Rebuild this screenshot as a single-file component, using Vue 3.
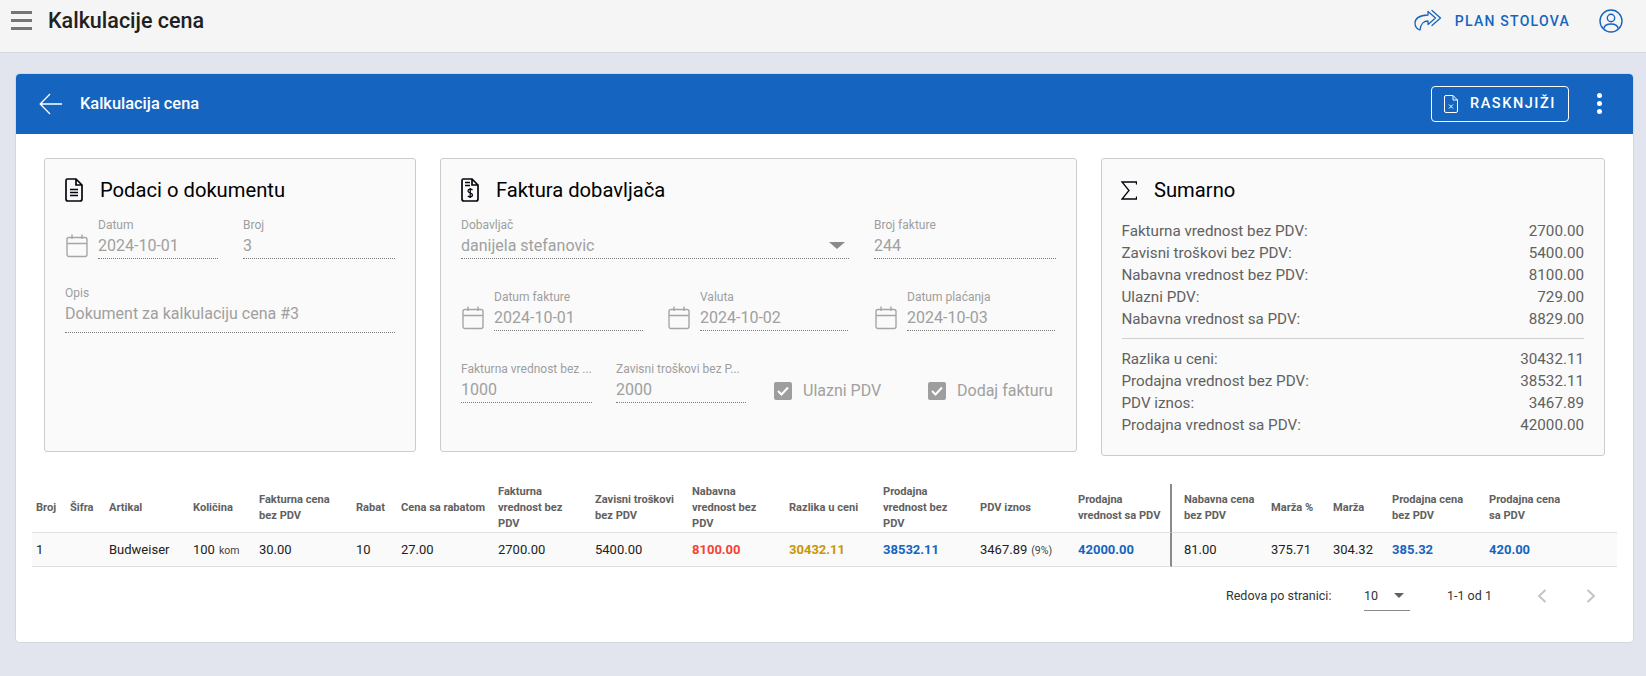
<script setup>
const columns = [
  { label: 'Broj', width: 38 },
  { label: 'Šifra', width: 39 },
  { label: 'Artikal', width: 84 },
  { label: 'Količina', width: 66 },
  { label: 'Fakturna cena\nbez PDV', width: 97 },
  { label: 'Rabat', width: 45 },
  { label: 'Cena sa rabatom', width: 97 },
  { label: 'Fakturna\nvrednost bez\nPDV', width: 97 },
  { label: 'Zavisni troškovi\nbez PDV', width: 97 },
  { label: 'Nabavna\nvrednost bez\nPDV', width: 97 },
  { label: 'Razlika u ceni', width: 94 },
  { label: 'Prodajna\nvrednost bez\nPDV', width: 97 },
  { label: 'PDV iznos', width: 98 },
  { label: 'Prodajna\nvrednost sa PDV', width: 94, divider: true },
  { label: 'Nabavna cena\nbez PDV', width: 99, afterDivider: true },
  { label: 'Marža %', width: 62 },
  { label: 'Marža', width: 59 },
  { label: 'Prodajna cena\nbez PDV', width: 97 },
  { label: 'Prodajna cena\nsa PDV', width: 128 }
]
const row = [
  { v: '1' }, { v: '' }, { v: 'Budweiser' }, { v: '100', small: 'kom' }, { v: '30.00' }, { v: '10' }, { v: '27.00' },
  { v: '2700.00' }, { v: '5400.00' }, { v: '8100.00', c: 'red' }, { v: '30432.11', c: 'gold' }, { v: '38532.11', c: 'blue' },
  { v: '3467.89', small: '(9%)' }, { v: '42000.00', c: 'blue' }, { v: '81.00' }, { v: '375.71' }, { v: '304.32' },
  { v: '385.32', c: 'blue' }, { v: '420.00', c: 'blue' }
]
const sumTop = [
  ['Fakturna vrednost bez PDV:', '2700.00'],
  ['Zavisni troškovi bez PDV:', '5400.00'],
  ['Nabavna vrednost bez PDV:', '8100.00'],
  ['Ulazni PDV:', '729.00'],
  ['Nabavna vrednost sa PDV:', '8829.00']
]
const sumBottom = [
  ['Razlika u ceni:', '30432.11'],
  ['Prodajna vrednost bez PDV:', '38532.11'],
  ['PDV iznos:', '3467.89'],
  ['Prodajna vrednost sa PDV:', '42000.00']
]
const dates = [
  { label: 'Datum fakture', value: '2024-10-01' },
  { label: 'Valuta', value: '2024-10-02' },
  { label: 'Datum plaćanja', value: '2024-10-03' }
]
</script>

<template>
  <div class="page">
    <header class="topbar">
      <div class="burger"><i></i><i></i><i></i></div>
      <h1 class="app-title">Kalkulacije cena</h1>
      <div class="plan">
        <svg width="28" height="23" viewBox="0 0 28 23" fill="none" stroke="#1565c0" stroke-width="1.3" stroke-linejoin="round" stroke-linecap="round">
          <path d="M14 2.5 L21.5 9 L14 15.5 V12 C9.5 12 7 14 6 21 C3 20 1 17.5 1 14 C1 9.5 6 6.5 14 6 Z" />
          <path d="M18 1.5 L26.5 9 L18 16.5" />
        </svg>
        <span>PLAN STOLOVA</span>
      </div>
      <svg class="account" width="24" height="24" viewBox="0 0 24 24" fill="none" stroke="#1565c0" stroke-width="1.4">
        <circle cx="12" cy="12" r="11" />
        <circle cx="12" cy="9" r="3.7" />
        <path d="M4.8 19.5 C5.5 16 8.5 15 12 15 C15.5 15 18.5 16 19.2 19.5" />
      </svg>
    </header>

    <main class="main">
      <section class="card">
        <div class="card-head">
          <svg class="back" width="24" height="22" viewBox="0 0 24 22" fill="none" stroke="#fff" stroke-width="1.3">
            <path d="M23 11 H1.5 M11 1 L1.2 11 L11 21" />
          </svg>
          <span class="card-title">Kalkulacija cena</span>
          <button class="raskn">
            <svg width="14" height="18" viewBox="0 0 14 18" fill="none" stroke="#fff" stroke-width="1">
              <path d="M1.5 .5 H9 L13.5 5 V16 A1.5 1.5 0 0 1 12 17.5 H2 A1.5 1.5 0 0 1 .5 16 V2 A1.5 1.5 0 0 1 2 .5 Z M9 .5 V5 H13.5" />
              <path d="M5 9.5 L9 13.5 M9 9.5 L5 13.5" />
            </svg>
            <span>RASKNJIŽI</span>
          </button>
          <div class="dots"><i></i><i></i><i></i></div>
        </div>

        <div class="card-body">
          <div class="panels">
            <div class="panel p1">
              <div class="panel-head">
                <svg width="18" height="24" viewBox="0 0 18 24" fill="none" stroke="#050510" stroke-width="1.7">
                  <path d="M2.5 1 H11 L17 7 V21 A2 2 0 0 1 15 23 H3 A2 2 0 0 1 1 21 V2.5 A1.5 1.5 0 0 1 2.5 1 Z M11 1 V7 H17" />
                  <path d="M5 11.5 H13 M5 14.5 H13 M5 17.5 H13" />
                </svg>
                <h2>Podaci o dokumentu</h2>
              </div>
              <div class="frow">
                <svg class="cal" width="22" height="24" viewBox="0 0 22 24" fill="none" stroke="#a6a6a6" stroke-width="1.4">
                  <rect x="1" y="3.5" width="20" height="19" rx="2" />
                  <path d="M1 9.5 H21 M6 .5 V5 M16 .5 V5" />
                </svg>
                <div class="field w120"><label>Datum</label><div class="val">2024-10-01</div></div>
                <div class="field grow"><label>Broj</label><div class="val">3</div></div>
              </div>
              <div class="frow mt-opis">
                <div class="field grow flush"><label>Opis</label><div class="val tall">Dokument za kalkulaciju cena #3</div></div>
              </div>
            </div>

            <div class="panel p2">
              <div class="panel-head">
                <svg width="18" height="24" viewBox="0 0 18 24" fill="none" stroke="#050510" stroke-width="1.7">
                  <path d="M2.5 1 H11 L17 7 V21 A2 2 0 0 1 15 23 H3 A2 2 0 0 1 1 21 V2.5 A1.5 1.5 0 0 1 2.5 1 Z M11 1 V7 H17" />
                  <path d="M4 4.5 H9 M4 7.5 H9" stroke-width="1.3" />
                  <path d="M11.5 12 C10.5 10.8 7 10.8 7 13 C7 15.5 11.5 14.5 11.5 17 C11.5 19.2 8 19.2 6.8 18 M9.2 10 V20" stroke-width="1.3" />
                </svg>
                <h2>Faktura dobavljača</h2>
              </div>
              <div class="frow">
                <div class="field dob flush">
                  <label>Dobavljač</label>
                  <div class="val select">danijela stefanovic<span class="caret"></span></div>
                </div>
                <div class="field grow flush"><label>Broj fakture</label><div class="val">244</div></div>
              </div>
              <div class="frow dates mt-dates">
                <div v-for="d in dates" :key="d.label" class="date-cell">
                  <svg class="cal" width="22" height="24" viewBox="0 0 22 24" fill="none" stroke="#a6a6a6" stroke-width="1.4">
                    <rect x="1" y="3.5" width="20" height="19" rx="2" />
                    <path d="M1 9.5 H21 M6 .5 V5 M16 .5 V5" />
                  </svg>
                  <div class="field grow"><label>{{ d.label }}</label><div class="val">{{ d.value }}</div></div>
                </div>
              </div>
              <div class="frow mt-values">
                <div class="field w131 flush"><label>Fakturna vrednost bez ...</label><div class="val">1000</div></div>
                <div class="field w130 flush"><label>Zavisni troškovi bez P...</label><div class="val">2000</div></div>
                <div class="checks">
                  <div class="check"><span class="box"><svg width="12" height="10" viewBox="0 0 12 10" fill="none" stroke="#fff" stroke-width="2"><path d="M1 5 L4.5 8.5 L11 1.5" /></svg></span>Ulazni PDV</div>
                  <div class="check"><span class="box"><svg width="12" height="10" viewBox="0 0 12 10" fill="none" stroke="#fff" stroke-width="2"><path d="M1 5 L4.5 8.5 L11 1.5" /></svg></span>Dodaj fakturu</div>
                </div>
              </div>
            </div>

            <div class="panel p3">
              <div class="panel-head">
                <svg width="16" height="19" viewBox="0 0 16 19" fill="none" stroke="#050510" stroke-width="1.3">
                  <path d="M15.5 3.5 V1 H1 L8 9.5 L1 18 H15.5 V15.5" />
                </svg>
                <h2>Sumarno</h2>
              </div>
              <div class="sum">
                <div v-for="s in sumTop" :key="s[0]" class="sum-row"><span>{{ s[0] }}</span><span>{{ s[1] }}</span></div>
                <div class="sum-sep"></div>
                <div v-for="s in sumBottom" :key="s[0]" class="sum-row"><span>{{ s[0] }}</span><span>{{ s[1] }}</span></div>
              </div>
            </div>
          </div>

          <table class="grid">
            <colgroup>
              <col v-for="c in columns" :key="c.label" :style="{ width: c.width + 'px' }" />
            </colgroup>
            <thead>
              <tr>
                <th v-for="c in columns" :key="c.label" :class="{ divider: c.divider, after: c.afterDivider }">{{ c.label }}</th>
              </tr>
            </thead>
            <tbody>
              <tr>
                <td v-for="(cell, i) in row" :key="i" :class="[cell.c, { divider: columns[i].divider, after: columns[i].afterDivider }]">{{ cell.v }}<small v-if="cell.small">{{ cell.small }}</small></td>
              </tr>
            </tbody>
          </table>

          <div class="pager">
            <span class="rpp">Redova po stranici:</span>
            <div class="rpp-select"><span>10</span><span class="mini-caret"></span></div>
            <span class="range">1-1 od 1</span>
            <svg class="chev" width="10" height="14" viewBox="0 0 10 14" fill="none" stroke="#c4c4c4" stroke-width="2"><path d="M8.5 1 L2 7 L8.5 13" /></svg>
            <svg class="chev" width="10" height="14" viewBox="0 0 10 14" fill="none" stroke="#c4c4c4" stroke-width="2"><path d="M1.5 1 L8 7 L1.5 13" /></svg>
          </div>
        </div>
      </section>
    </main>
  </div>
</template>

<style>
html, body { margin: 0; background: #e2e5ee; }
</style>

<style scoped>
.page { width: 1646px; height: 676px; overflow: hidden; background: #e2e5ee; font-family: Roboto, "Liberation Sans", sans-serif; }
.topbar { height: 53px; box-sizing: border-box; background: #f5f5f5; border-bottom: 1px solid #d6d9e3; display: flex; align-items: center; padding: 0 23px 11px 11px; }
.burger { width: 21px; display: flex; flex-direction: column; gap: 5px; }
.burger i { display: block; height: 3px; background: #757575; }
.app-title { margin: 0 0 0 16px; font-size: 21.5px; font-weight: 500; color: #212121; flex: 1; }
.plan { display: flex; align-items: center; gap: 13px; color: #1565c0; font-size: 14px; font-weight: 500; letter-spacing: 1.25px; margin-right: 29px; }
.main { padding: 21px 13px 0 16px; }
.card { width: 1617px; height: 568px; background: #fff; border-radius: 4px; box-shadow: 0 0 0 1px rgba(0,0,0,.06); overflow: hidden; }
.card-head { height: 60px; background: #1565c0; display: flex; align-items: center; color: #fff; padding: 0 27px 1px 23px; box-sizing: border-box; }
.card-title { margin-left: 17px; font-size: 16.4px; font-weight: 500; flex: 1; }
.raskn { height: 36px; width: 138px; box-sizing: border-box; background: transparent; border: 1px solid #fff; border-radius: 4px; color: #fff; display: flex; align-items: center; justify-content: center; gap: 12px; font-family: inherit; font-size: 14.5px; font-weight: 500; letter-spacing: 1.55px; padding: 0; }
.dots { display: flex; flex-direction: column; gap: 3px; margin-left: 28px; margin-right: 4px; }
.dots i { display: block; width: 5px; height: 5px; border-radius: 50%; background: #fff; }
.card-body { padding: 24px 0 0 16px; }
.panels { display: flex; gap: 24px; align-items: flex-start; height: 298px; margin: 0 0 28px 12px; }
.panel { box-sizing: border-box; background: #fafafa; border: 1px solid #ccc; border-radius: 3px; padding: 19px 20px 0; }
.p1 { width: 372px; height: 294px; }
.p2 { width: 637px; height: 294px; }
.p3 { width: 504px; height: 298px; padding-left: 19px; }
.panel-head { display: flex; align-items: center; height: 24px; }
.panel-head svg { flex: none; }
.panel-head h2 { margin: 0 0 0 17px; font-size: 20.2px; font-weight: 400; color: #000; line-height: 24px; }
.frow { display: flex; align-items: flex-end; margin-top: 15px; }
.field { display: flex; flex-direction: column; min-width: 0; }
.field label { font-size: 12px; line-height: 16px; color: #9e9e9e; white-space: nowrap; }
.field .val { box-sizing: border-box; font-size: 16px; line-height: 24px; height: 25px; color: #a0a0a0; border-bottom: 1px dotted #7d7d7d; margin-top: 1px; position: relative; white-space: nowrap; }
.field .val.tall { height: 31px; }
.cal { flex: none; margin: 0 10px 1px 1px; }
.w120 { width: 120px; margin-right: 25px; flex: none; }
.w131 { width: 131px; margin-right: 24px; flex: none; }
.w130 { width: 130px; flex: none; }
.grow { flex: 1; }
.mt-opis { margin-top: 26px; }
.dob { width: 388px; margin-right: 25px; flex: none; }
.caret { position: absolute; right: 4px; top: 8px; border: 8px solid transparent; border-top: 7px solid #8a8a8a; border-bottom: 0; }
.mt-dates { margin-top: 30px; }
.date-cell { display: flex; align-items: flex-end; flex: none; }
.date-cell:nth-child(1) { width: 182px; margin-right: 24px; }
.date-cell:nth-child(2) { width: 181px; margin-right: 26px; }
.date-cell:nth-child(3) { width: 181px; }
.mt-values { margin-top: 30px; }
.checks { display: flex; margin-left: 28px; padding-bottom: 3px; flex: none; }
.check { display: flex; align-items: center; font-size: 16px; color: #a0a0a0; width: 154px; }
.check:last-child { width: auto; white-space: nowrap; }
.box { width: 18px; height: 18px; border-radius: 2px; background: #9e9e9e; display: flex; align-items: center; justify-content: center; margin-right: 11px; flex: none; }
.sum { margin-top: 18px; padding-left: 0.5px; }
.sum-row { display: flex; justify-content: space-between; font-size: 15.2px; line-height: 22px; color: #616161; }
.sum-sep { height: 1px; background: #d0d0d0; margin: 8px 0 9px; }
.grid { border-collapse: separate; border-spacing: 0; table-layout: fixed; width: 1585px; font-size: 13px; }
.grid th { height: 48px; box-sizing: border-box; text-align: left; vertical-align: middle; padding: 0; font-size: 11.1px; font-weight: 700; line-height: 16px; color: #616161; white-space: pre-line; border-bottom: 1px solid #e0e0e0; }
.grid td { height: 34px; box-sizing: border-box; padding: 0; color: #212121; background: #fafafa; border-bottom: 1px solid #e0e0e0; white-space: nowrap; }
.grid th:first-child, .grid td:first-child { padding-left: 4px; }
.grid .divider { border-right: 2px solid #8a8a8a; }
.grid .after { padding-left: 12px; }
.grid small { font-size: 10.5px; color: #424242; margin-left: 4px; }
.grid td.red { color: #f44336; font-weight: 700; }
.grid td.gold { color: #c99700; font-weight: 700; }
.grid td.blue { color: #1565c0; font-weight: 700; }
.pager { display: flex; align-items: center; height: 57px; font-size: 12.5px; color: #333; }
.pager > * { flex: none; }
.rpp { margin-left: 1194px; width: 138px; }
.rpp-select { width: 46px; height: 29px; margin-top: 1px; box-sizing: border-box; border-bottom: 1px solid #8a8a8a; display: flex; align-items: center; justify-content: space-between; padding-right: 6px; }
.mini-caret { border: 5px solid transparent; border-top: 5px solid #616161; border-bottom: 0; }
.range { margin-left: 37px; width: 90px; }
.chev { margin-right: 39px; }
</style>
